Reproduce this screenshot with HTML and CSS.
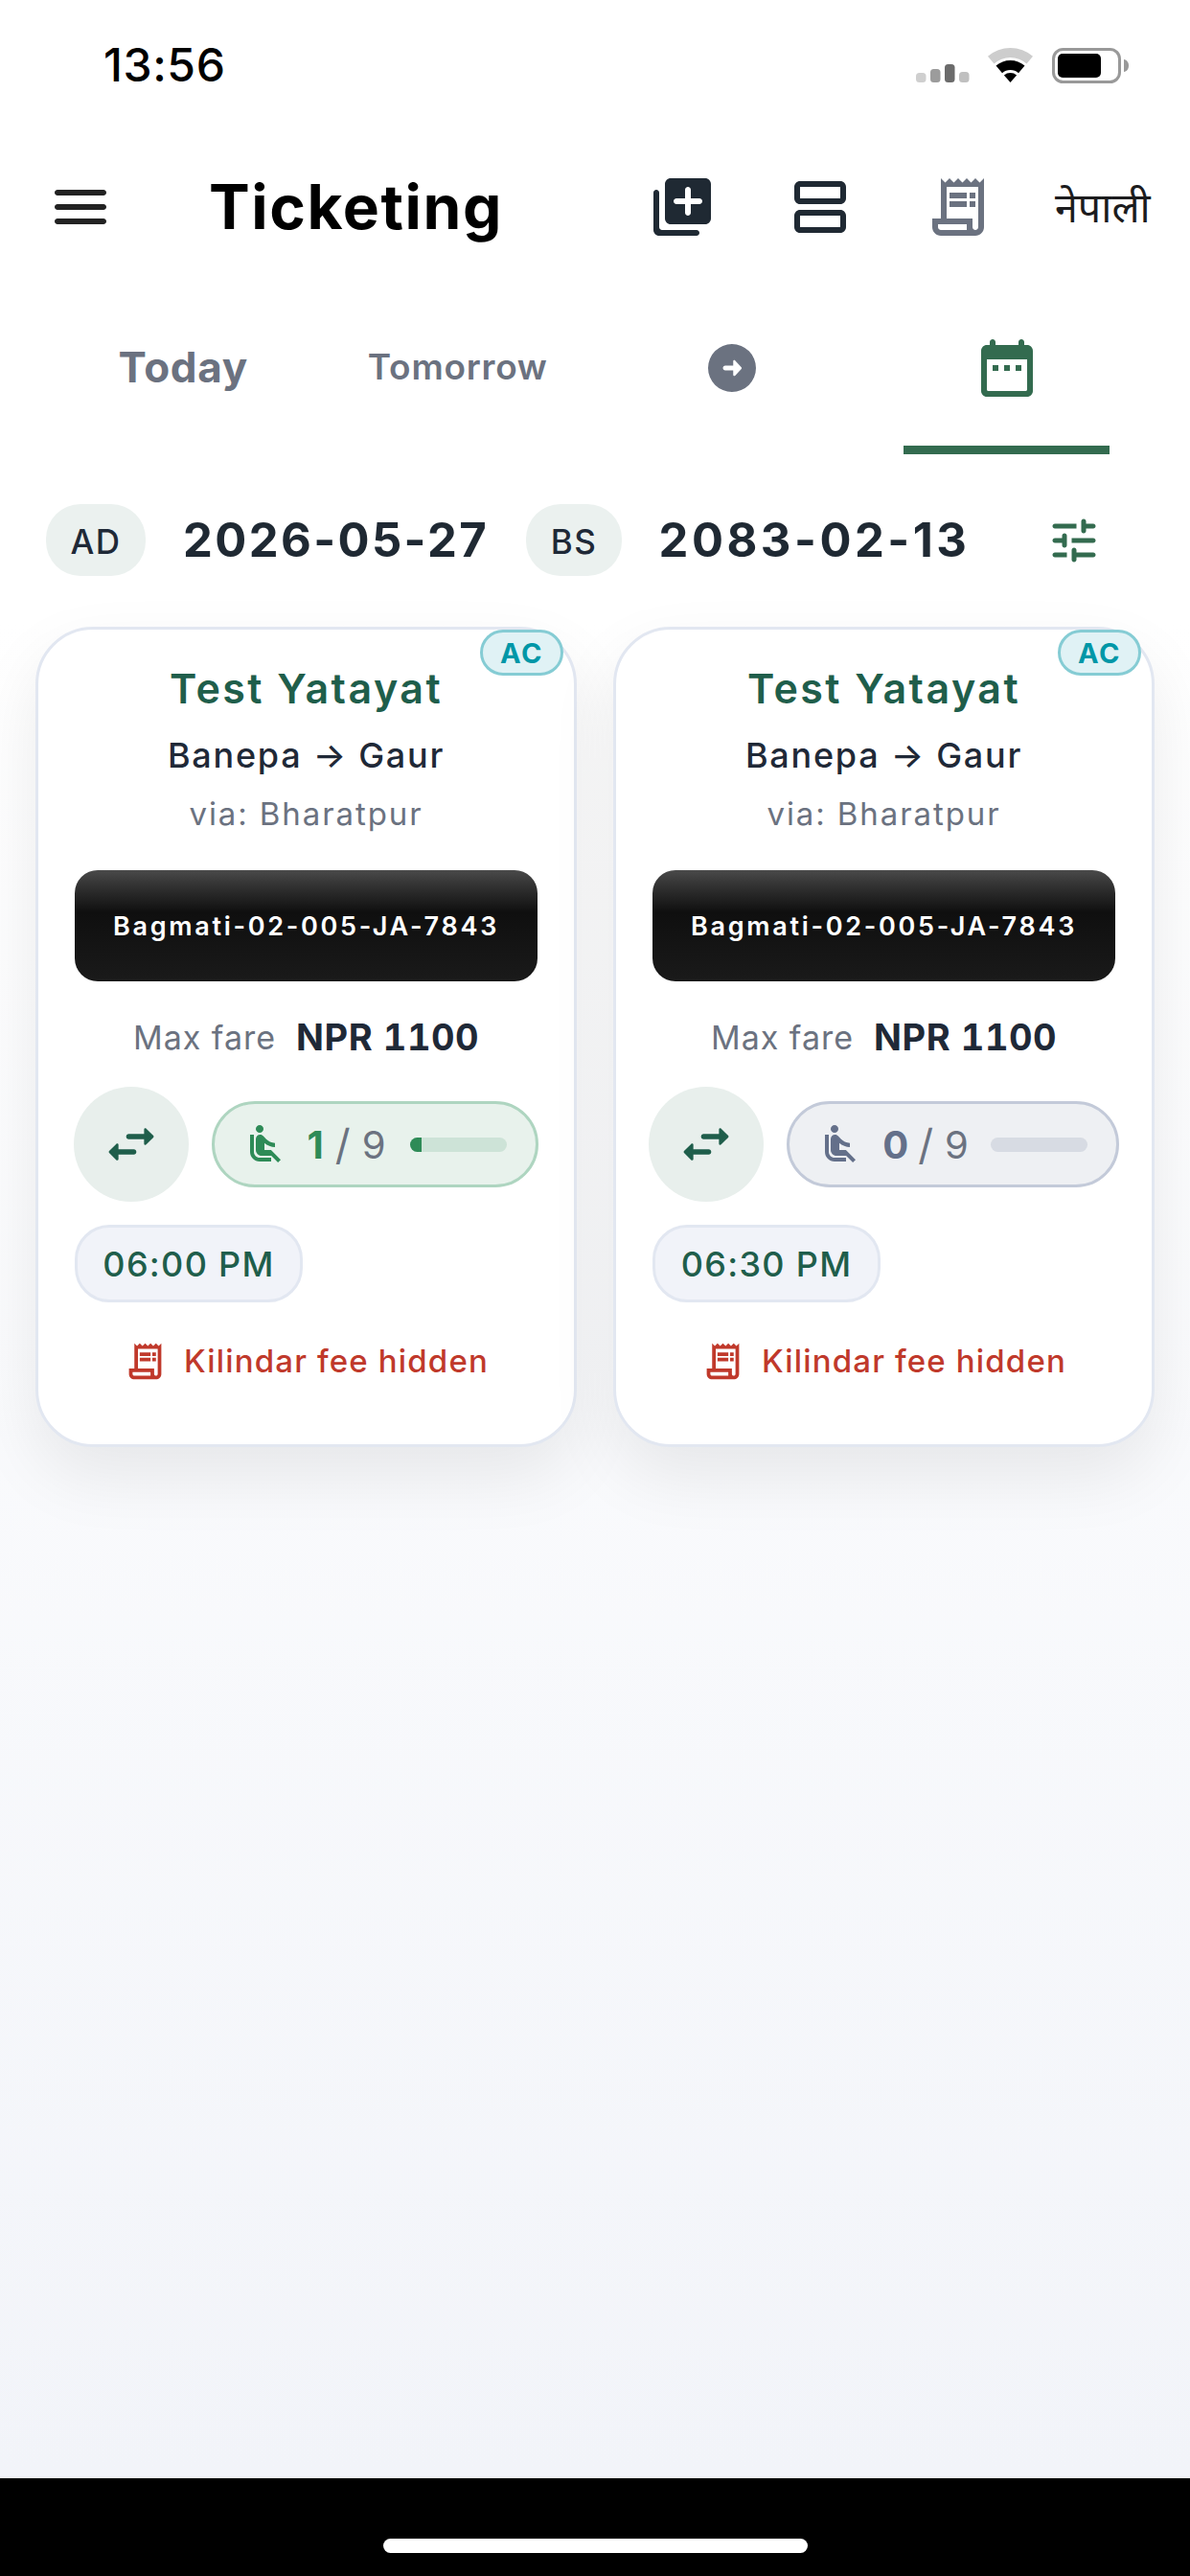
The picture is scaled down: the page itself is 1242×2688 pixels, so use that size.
FILE: index.html
```html
<!DOCTYPE html>
<html lang="en">
<head>
<meta charset="utf-8">
<title>Ticketing</title>
<link rel="stylesheet" href="styles.css">
</head>
<body>
<svg class="sprite" xmlns="http://www.w3.org/2000/svg">
  <symbol id="i-receipt" viewBox="0 0 24 24"><path d="M19.5 3.5 18 2l-1.5 1.5L15 2l-1.5 1.5L12 2l-1.5 1.5L9 2 7.5 3.5 6 2v14H3v3c0 1.66 1.34 3 3 3h12c1.66 0 3-1.34 3-3V2l-1.5 1.5zM15 20H6c-.55 0-1-.45-1-1v-1h10v2zm4-1c0 .55-.45 1-1 1s-1-.45-1-1v-3H8V5h11v14zM9 7h6v2H9zM16 7h2v2h-2zM9 10h6v2H9zM16 10h2v2h-2z"/></symbol>
  <symbol id="i-swap" viewBox="0 0 24 24"><path d="M6.14 11.86l-2.78 2.79c-.19.2-.19.51 0 .71l2.78 2.79c.31.32.85.09.85-.35V16H13c.55 0 1-.45 1-1s-.45-1-1-1H6.99v-1.79c0-.45-.54-.67-.85-.35zm14.51-3.21l-2.78-2.79c-.31-.32-.85-.09-.85.35V8H11c-.55 0-1 .45-1 1s.45 1 1 1h6.01v1.79c0 .45.54.67.85.35l2.78-2.79c.2-.19.2-.51.01-.7z"/></symbol>
  <symbol id="i-seat" viewBox="0 0 24 24"><path d="M7.59 5.41c-.78-.78-.78-2.05 0-2.83.78-.78 2.05-.78 2.83 0 .78.78.78 2.05 0 2.83-.79.79-2.05.79-2.83 0zM6 16V7H4v9c0 2.76 2.24 5 5 5h6v-2H9c-1.66 0-3-1.34-3-3zm14 4.07L14.93 15H11.5v-3.68c1.4 1.15 3.6 2.16 5.5 2.16v-2.16c-1.66.02-3.61-.87-4.67-2.04l-1.4-1.55c-.19-.21-.43-.38-.69-.5-.29-.14-.62-.23-.96-.23h-.03C8.01 7 7 8.01 7 9.25V15c0 1.66 1.34 3 3 3h5.07l3.5 3.5L20 20.07z"/></symbol>
</svg>

<div class="page">
  <div class="status">
    <span class="clock">13:56</span>
    <svg class="status-icons" viewBox="0 0 222 38" xmlns="http://www.w3.org/2000/svg">
      <rect x="0" y="27" width="10.5" height="10" rx="3.500" fill="#cfcfcf"/>
      <rect x="15" y="23" width="10.5" height="14" rx="3.500" fill="#9c9c9c"/>
      <rect x="30" y="18" width="10.5" height="19" rx="3.500" fill="#6b6b6b"/>
      <rect x="45" y="26" width="10.5" height="11" rx="3.500" fill="#c0c0c0"/>
      <g transform="translate(75 1)">
        <path d="M0 8.7A36 36 0 0 1 47 8.7L40.5 16.4A26 26 0 0 0 6.500 16.400Z" fill="#cdcdcd"/>
        <path d="M8.500 18.600A23 23 0 0 1 38.500 18.600L32 26.200A13 13 0 0 0 15 26.200Z"/>
        <path d="M23.500 36L16.900 28.500A10 10 0 0 1 30.100 28.500Z"/>
      </g>
      <rect x="143.500" y="2.500" width="69" height="34" rx="10" fill="none" stroke="#999" stroke-width="3"/>
      <rect x="148" y="7" width="45" height="25" rx="5"/>
      <path d="M217 13c3 .5 5 3 5 6.500s-2 6-5 6.500z" fill="#999"/>
    </svg>
  </div>

  <header class="topbar">
    <svg class="ic72 ic-dark2" viewBox="0 0 24 24"><path d="M4 18h16c.55 0 1-.45 1-1s-.45-1-1-1H4c-.55 0-1 .45-1 1s.45 1 1 1zm0-5h16c.55 0 1-.45 1-1s-.45-1-1-1H4c-.55 0-1 .45-1 1s.45 1 1 1zM3 7c0 .55.45 1 1 1h16c.55 0 1-.45 1-1s-.45-1-1-1H4c-.55 0-1 .45-1 1z"/></svg>
    <h1 class="title">Ticketing</h1>
    <div class="actions">
      <svg class="ic72 ic-dark" viewBox="0 0 24 24"><path d="M3 6c-.55 0-1 .45-1 1v13c0 1.100.9 2 2 2h13c.55 0 1-.45 1-1s-.45-1-1-1H5c-.55 0-1-.45-1-1V7c0-.55-.45-1-1-1zm17-4H8c-1.100 0-2 .9-2 2v12c0 1.100.9 2 2 2h12c1.100 0 2-.9 2-2V4c0-1.100-.9-2-2-2zm-2 9h-3v3c0 .55-.45 1-1 1s-1-.45-1-1v-3h-3c-.55 0-1-.45-1-1s.45-1 1-1h3V6c0-.55.45-1 1-1s1 .45 1 1v3h3c.55 0 1 .45 1 1s-.45 1-1 1z"/></svg>
      <svg class="ic72 ic-dark" viewBox="0 0 24 24"><path d="M19 13H5c-1.100 0-2 .9-2 2v4c0 1.100.9 2 2 2h14c1.100 0 2-.9 2-2v-4c0-1.100-.9-2-2-2zm0 6H5v-4h14v4zm0-16H5c-1.100 0-2 .9-2 2v4c0 1.100.9 2 2 2h14c1.100 0 2-.9 2-2V5c0-1.100-.9-2-2-2zm0 6H5V5h14v4z"/></svg>
      <svg class="ic72 ic-grey"><use href="#i-receipt"/></svg>
    </div>
    <span class="lang">नेपाली</span>
  </header>

  <nav class="tabs">
    <div class="tab tab-today">Today</div>
    <div class="tab tab-tomorrow">Tomorrow</div>
    <div class="tab">
      <svg class="ic60 ic-grey" viewBox="0 0 24 24"><path fill-rule="evenodd" d="M12 2a10 10 0 1 0 0 20 10 10 0 0 0 0-20zM9.200 11h3.300V9.200c0-.45.5-.65.8-.35l2.600 2.800c.2.2.2.5 0 .7l-2.600 2.800c-.3.3-.8.1-.8-.35V13H9.200c-.55 0-1-.45-1-1s.45-1 1-1z"/></svg>
    </div>
    <div class="tab tab-active">
      <svg class="ic72 ic-green" viewBox="0 0 24 24"><path fill-rule="evenodd" d="M7 2c.55 0 1 .45 1 1v1h8V3c0-.55.45-1 1-1s1 .45 1 1v1h1c1.100 0 2 .9 2 2v14c0 1.100-.9 2-2 2H5c-1.100 0-2-.9-2-2V6c0-1.100.9-2 2-2h1V3c0-.55.45-1 1-1zM5 9v10.500c0 .28.22.5.5.5h13c.28 0 .5-.22.5-.5V9H5zm2 2h2v2H7v-2zm4 0h2v2h-2v-2zm4 0h2v2h-2v-2z"/></svg>
    </div>
  </nav>

  <section class="dates">
    <span class="era">AD</span>
    <span class="date date-ad">2026-05-27</span>
    <span class="era era-bs">BS</span>
    <span class="date date-bs">2083-02-13</span>
    <svg class="ic60 ic-green tune" viewBox="0 0 24 24"><path d="M3 18c0 .55.45 1 1 1h5v-2H4c-.55 0-1 .45-1 1zM3 6c0 .55.45 1 1 1h9V5H4c-.55 0-1 .45-1 1zm10 14v-1h7c.55 0 1-.45 1-1s-.45-1-1-1h-7v-1c0-.55-.45-1-1-1s-1 .45-1 1v4c0 .55.45 1 1 1s1-.45 1-1zM7 10v1H4c-.55 0-1 .45-1 1s.45 1 1 1h3v1c0 .55.45 1 1 1s1-.45 1-1v-4c0-.55-.45-1-1-1s-1 .45-1 1zm14 2c0-.55-.45-1-1-1h-9v2h9c.55 0 1-.45 1-1zm-5-3c.55 0 1-.45 1-1V7h3c.55 0 1-.45 1-1s-.45-1-1-1h-3V4c0-.55-.45-1-1-1s-1 .45-1 1v4c0 .55.45 1 1 1z"/></svg>
  </section>

  <main class="cards">
    <article class="card">
      <span class="ac">AC</span>
      <div class="operator">Test Yatayat</div>
      <div class="route">Banepa → Gaur</div>
      <div class="via">via: Bharatpur</div>
      <div class="plate">Bagmati-02-005-JA-7843</div>
      <div class="fare"><span class="fare-label">Max fare</span><span class="fare-value">NPR 1100</span></div>
      <div class="controls">
        <div class="swap"><svg class="ic64"><use href="#i-swap"/></svg></div>
        <div class="seats seats-on">
          <svg class="ic48"><use href="#i-seat"/></svg>
          <span class="count"><b>1</b><i>/</i><em>9</em></span>
          <span class="bar"><span class="fill" style="width:11%"></span></span>
        </div>
      </div>
      <div class="time">06:00 PM</div>
      <div class="fee"><svg class="ic45"><use href="#i-receipt"/></svg><span>Kilindar fee hidden</span></div>
    </article>

    <article class="card">
      <span class="ac">AC</span>
      <div class="operator">Test Yatayat</div>
      <div class="route">Banepa → Gaur</div>
      <div class="via">via: Bharatpur</div>
      <div class="plate">Bagmati-02-005-JA-7843</div>
      <div class="fare"><span class="fare-label">Max fare</span><span class="fare-value">NPR 1100</span></div>
      <div class="controls">
        <div class="swap"><svg class="ic64"><use href="#i-swap"/></svg></div>
        <div class="seats seats-off">
          <svg class="ic48"><use href="#i-seat"/></svg>
          <span class="count"><b>0</b><i>/</i><em>9</em></span>
          <span class="bar"></span>
        </div>
      </div>
      <div class="time">06:30 PM</div>
      <div class="fee"><svg class="ic45"><use href="#i-receipt"/></svg><span>Kilindar fee hidden</span></div>
    </article>
  </main>

  <footer class="homebar"><span class="indicator"></span></footer>
</div>
</body>
</html>
```
FILE: styles.css
```css
* { box-sizing: border-box; }
html, body { margin: 0; padding: 0; }
body { width: 1242px; height: 2688px; overflow: hidden; font-family: Inter, "Noto Sans", "Liberation Sans", sans-serif; }
.sprite { display: none; }
.page { width: 1242px; height: 2688px; display: flex; flex-direction: column; background: linear-gradient(#fff 24%, #f2f4f9 96%); }

.ic72 { width: 72px; height: 72px; flex: none; display: block; }
.ic64 { width: 64px; height: 64px; flex: none; display: block; }
.ic60 { width: 60px; height: 60px; flex: none; display: block; }
.ic48 { width: 48px; height: 48px; flex: none; display: block; }
.ic45 { width: 45px; height: 45px; flex: none; display: block; }
.ic-dark { fill: #1f2933; }
.ic-dark2 { fill: #222; }
.ic-grey { fill: #6b7280; }
.ic-green { fill: #336b4f; }

.status { height: 135px; display: flex; align-items: center; justify-content: space-between; padding: 0 64px 0 108px; }
.clock { font-size: 48px; font-weight: 500; line-height: 1; letter-spacing: .6px; color: #000; }
.status-icons { width: 222px; height: 38px; display: block; }

.topbar { height: 162px; display: flex; align-items: center; padding-left: 48px; }
.title { margin: 0 0 0 98px; width: 458px; flex: none; font-size: 64px; line-height: 80px; font-weight: 700; letter-spacing: 1.6px; color: #000; }
.actions { display: flex; gap: 72px; }
.lang { margin-left: 65px; font-size: 43px; line-height: 50px; color: #1c1c1e; font-family: "Noto Sans", "DejaVu Sans", sans-serif; }

.tabs { height: 177px; padding: 0 48px; display: grid; grid-template-columns: repeat(4, 1fr); }
.tab { position: relative; display: flex; align-items: center; justify-content: center; padding-bottom: 3px; color: #6b7280; font-weight: 700; }
.tab-today { font-size: 44px; letter-spacing: .7px; padding-bottom: 6px; }
.tab-tomorrow { font-size: 37px; font-weight: 600; letter-spacing: .75px; padding-bottom: 6px; }
.tab-active::after { content: ""; position: absolute; left: 12.5%; right: 12.5%; bottom: 0; height: 9px; background: #336b4f; }

.dates { margin-top: 52px; height: 75px; padding-left: 48px; display: flex; align-items: center; }
.era { width: 104px; height: 75px; padding-top: 2px; border-radius: 36px; background: #ebf1ef; color: #1f2937; font-size: 35px; font-weight: 500; letter-spacing: 1.5px; display: flex; align-items: center; justify-content: center; flex: none; }
.era-bs { width: 100px; }
.date { flex: none; text-align: center; font-size: 49px; line-height: 60px; font-weight: 700; color: #1f2933; }
.date-ad { width: 397px; letter-spacing: 2.4px; }
.date-bs { width: 402px; letter-spacing: 3.5px; }
.tune { margin-left: 40px; }

.cards { margin-top: 53px; padding: 0 37px; display: grid; grid-template-columns: 565px 565px; gap: 38px; }
.card { position: relative; height: 856px; padding: 31px 38px 0; background: #fff; border: 3px solid #e2e7f1; border-radius: 60px; box-shadow: 0 30px 70px rgba(0, 0, 0, .08); text-align: center; }
.ac { position: absolute; top: 0; right: 11px; width: 87px; height: 48px; display: flex; align-items: center; justify-content: center; border: 3px solid #85ccd4; border-radius: 24px; background: #e0f2f5; color: #0097a7; font-size: 29px; font-weight: 700; letter-spacing: 1.5px; }
.operator { font-size: 43px; line-height: 60px; font-weight: 600; letter-spacing: 2.45px; color: #1f5e4b; }
.route { margin-top: 15px; font-size: 36px; line-height: 50px; font-weight: 500; letter-spacing: 1.75px; color: #1f2937; }
.via { margin-top: 13px; font-size: 33px; line-height: 46px; letter-spacing: 1.9px; color: #6b7280; }
.plate { margin-top: 36px; height: 116px; border-radius: 24px; background: linear-gradient(#4a4a4a 0, #353535 12%, #0f0f0f 38%, #1a1a1a 100%); color: #fff; font-size: 27px; font-weight: 600; letter-spacing: 2.7px; display: flex; align-items: center; justify-content: center; }
.fare { margin-top: 33px; height: 50px; display: flex; align-items: center; justify-content: center; gap: 21px; }
.fare-label { font-size: 34px; letter-spacing: 1px; color: #6b7280; }
.fare-value { font-size: 38px; font-weight: 700; letter-spacing: .5px; font-variant-numeric: tabular-nums; color: #1f2937; }
.controls { margin-top: 27px; height: 120px; display: flex; align-items: center; justify-content: center; gap: 24px; margin-left: -6px; margin-right: -6px; }
.swap { width: 120px; height: 120px; flex: none; border-radius: 50%; background: #e8efec; display: flex; align-items: center; justify-content: center; fill: #1f5e4b; }
.seats { height: 90px; flex: none; padding: 0 30px 0 29px; border: 3px solid; border-radius: 45px; display: flex; align-items: center; }
.seats-on { background: #e8f2ec; border-color: #aed5c0; fill: #2e8b57; }
.seats-off { background: #eef0f3; border-color: #c3cad9; fill: #64708a; }
.count { margin-left: 20px; display: flex; align-items: center; font-size: 40px; color: #6b7280; }
.count b { font-weight: 700; }
.seats-on .count b { color: #2e8b57; }
.seats-off .count b { color: #64708a; margin-right: -2px; }
.count i { font-style: normal; margin: 0 12px; font-size: 44px; }
.count em { font-style: normal; }
.bar { width: 101px; height: 15px; margin-left: 26px; border-radius: 8px; overflow: hidden; display: block; }
.seats-on .bar { background: #cde3d7; }
.seats-off .bar { background: #d7dbe3; margin-left: 23px; }
.fill { display: block; height: 100%; background: #2e8b57; }
.time { margin-top: 24px; width: 238px; height: 81px; border: 3px solid #e2e7f1; border-radius: 36px; background: #f1f3f9; color: #1f5e4b; font-size: 36px; font-weight: 500; letter-spacing: 1.3px; display: flex; align-items: center; justify-content: center; }
.fee { margin-top: 36px; height: 50px; display: flex; align-items: center; justify-content: center; gap: 18px; fill: #c0392b; color: #c0392b; font-size: 33px; font-weight: 500; letter-spacing: 1.15px; }

.homebar { margin-top: auto; height: 102px; background: #000; display: flex; justify-content: center; padding-top: 63px; }
.indicator { width: 443px; height: 15px; border-radius: 8px; background: #fff; display: block; }
```
